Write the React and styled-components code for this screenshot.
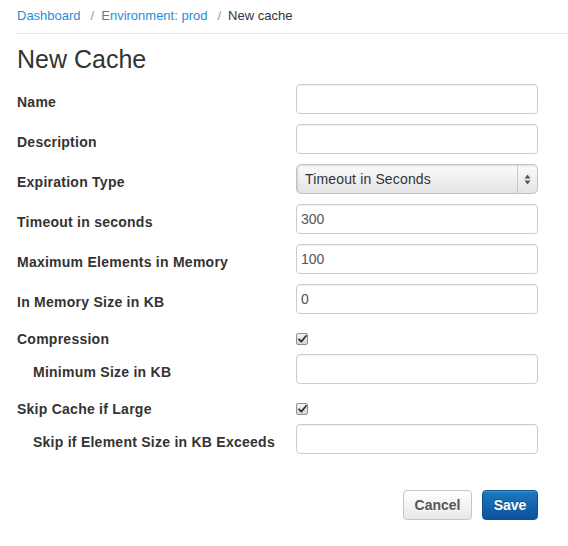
import styled, { createGlobalStyle } from "styled-components";

const GlobalStyle = createGlobalStyle`
  body {
    margin: 0;
    background: #ffffff;
    font-family: "Liberation Sans", Arial, sans-serif;
    color: #333333;
  }
`;

const Page = styled.div`
  padding-left: 17px;
  width: 551px;
`;

const Breadcrumb = styled.div`
  padding: 7px 0 8px;
  line-height: 18px;
  font-size: 13px;
  border-bottom: 1px solid #e5e5e5;
  color: #333333;
`;

const Crumb = styled.a`
  color: #1f8dd6;
  text-decoration: none;
`;

const Divider = styled.span`
  color: #999999;
  margin: 0 7px 0 10px;
`;

const Title = styled.h1`
  margin: 10px 0 0;
  font-size: 25px;
  font-weight: 400;
  line-height: 30px;
  color: #333333;
`;

const Form = styled.form`
  display: flex;
  flex-direction: column;
`;

const Row = styled.div`
  display: grid;
  grid-template-columns: 279px 242px;
  align-items: start;
  margin-top: ${(p) => p.$top ?? 10}px;
`;

const Label = styled.label`
  font-size: 14px;
  font-weight: 700;
  line-height: 20px;
  letter-spacing: 0.25px;
  padding-top: ${(p) => (p.$inline ? 0 : 8)}px;
  padding-left: ${(p) => (p.$indent ? 16 : 0)}px;
  color: #333333;
`;

const Input = styled.input`
  box-sizing: border-box;
  width: 242px;
  height: 30px;
  margin: 0;
  padding: 4px 4px;
  border: 1px solid #cccccc;
  border-radius: 4px;
  background: #ffffff;
  font-family: "Liberation Sans", Arial, sans-serif;
  font-size: 14px;
  color: #555555;
  box-shadow: inset 0 1px 1px rgba(0, 0, 0, 0.05);
  outline: none;
`;

const Select = styled.div`
  box-sizing: border-box;
  width: 242px;
  height: 30px;
  display: flex;
  align-items: stretch;
  border: 1px solid #c2c2c2;
  border-radius: 5px;
  background: linear-gradient(#fbfbfb, #e4e4e4);
  box-shadow: inset 1px 1px 2px rgba(0, 0, 0, 0.12);
  font-size: 14px;
  letter-spacing: 0.15px;
  color: #333333;
`;

const SelectText = styled.div`
  flex: 1;
  display: flex;
  align-items: center;
  padding-left: 8px;
`;

const SelectArrows = styled.div`
  width: 19px;
  border-left: 1px solid #c9c9c9;
  display: flex;
  align-items: center;
  justify-content: center;
`;

const CheckCell = styled.div`
  height: 20px;
  display: flex;
  align-items: center;
`;

const CheckBox = styled.span`
  box-sizing: border-box;
  width: 12px;
  height: 12px;
  border: 1px solid #8f8f8f;
  border-radius: 2px;
  background: linear-gradient(#f4f4f4, #d6d6d6);
  display: flex;
  align-items: center;
  justify-content: center;
`;

const Actions = styled.div`
  display: flex;
  justify-content: flex-end;
  gap: 10px;
  width: 521px;
  margin-top: 36px;
`;

const Button = styled.button`
  box-sizing: border-box;
  height: 30px;
  width: ${(p) => (p.$primary ? 56 : 69)}px;
  padding: 0;
  border-radius: 4px;
  font-family: "Liberation Sans", Arial, sans-serif;
  font-size: 14px;
  font-weight: 700;
  cursor: pointer;
  border: 1px solid ${(p) => (p.$primary ? "#0b4f96" : "#c5c5c5")};
  color: ${(p) => (p.$primary ? "#ffffff" : "#555555")};
  background: ${(p) =>
    p.$primary
      ? "linear-gradient(#1c7bbd, #0d519f)"
      : "linear-gradient(#ffffff, #e9e9e9)"};
  text-shadow: ${(p) =>
    p.$primary ? "0 -1px 0 rgba(0,0,0,0.25)" : "0 1px 0 rgba(255,255,255,0.75)"};
  box-shadow: inset 0 1px 0 rgba(255, 255, 255, 0.2), 0 1px 2px rgba(0, 0, 0, 0.05);
`;

const Arrows = () => (
  <svg width="7" height="11" viewBox="0 0 7 11">
    <path d="M3.5 0.5 L6.5 4.5 L0.5 4.5 Z" fill="#555" />
    <path d="M3.5 10.5 L6.5 6.5 L0.5 6.5 Z" fill="#555" />
  </svg>
);

const Check = () => (
  <svg width="9" height="8" viewBox="0 0 9 8">
    <path
      d="M1 4.3 L3.3 6.6 L8 1"
      fill="none"
      stroke="#333"
      strokeWidth="1.8"
      strokeLinecap="round"
      strokeLinejoin="round"
    />
  </svg>
);

const TextRow = ({ label, value, indent, top }) => (
  <Row $top={top}>
    <Label $indent={indent}>{label}</Label>
    <Input defaultValue={value} />
  </Row>
);

const CheckRow = ({ label }) => (
  <Row $top={15}>
    <Label $inline>{label}</Label>
    <CheckCell>
      <CheckBox>
        <Check />
      </CheckBox>
    </CheckCell>
  </Row>
);

export default function App() {
  return (
    <Page>
      <GlobalStyle />
      <Breadcrumb>
        <Crumb href="#">Dashboard</Crumb>
        <Divider>/</Divider>
        <Crumb href="#">Environment: prod</Crumb>
        <Divider>/</Divider>
        New cache
      </Breadcrumb>
      <Title>New Cache</Title>
      <Form onSubmit={(e) => e.preventDefault()}>
        <TextRow label="Name" value="" />
        <TextRow label="Description" value="" />
        <Row>
          <Label>Expiration Type</Label>
          <Select>
            <SelectText>Timeout in Seconds</SelectText>
            <SelectArrows>
              <Arrows />
            </SelectArrows>
          </Select>
        </Row>
        <TextRow label="Timeout in seconds" value="300" />
        <TextRow label="Maximum Elements in Memory" value="100" />
        <TextRow label="In Memory Size in KB" value="0" />
        <CheckRow label="Compression" />
        <TextRow label="Minimum Size in KB" value="" indent top={5} />
        <CheckRow label="Skip Cache if Large" />
        <TextRow label="Skip if Element Size in KB Exceeds" value="" indent top={5} />
        <Actions>
          <Button type="button">Cancel</Button>
          <Button type="submit" $primary>
            Save
          </Button>
        </Actions>
      </Form>
    </Page>
  );
}
